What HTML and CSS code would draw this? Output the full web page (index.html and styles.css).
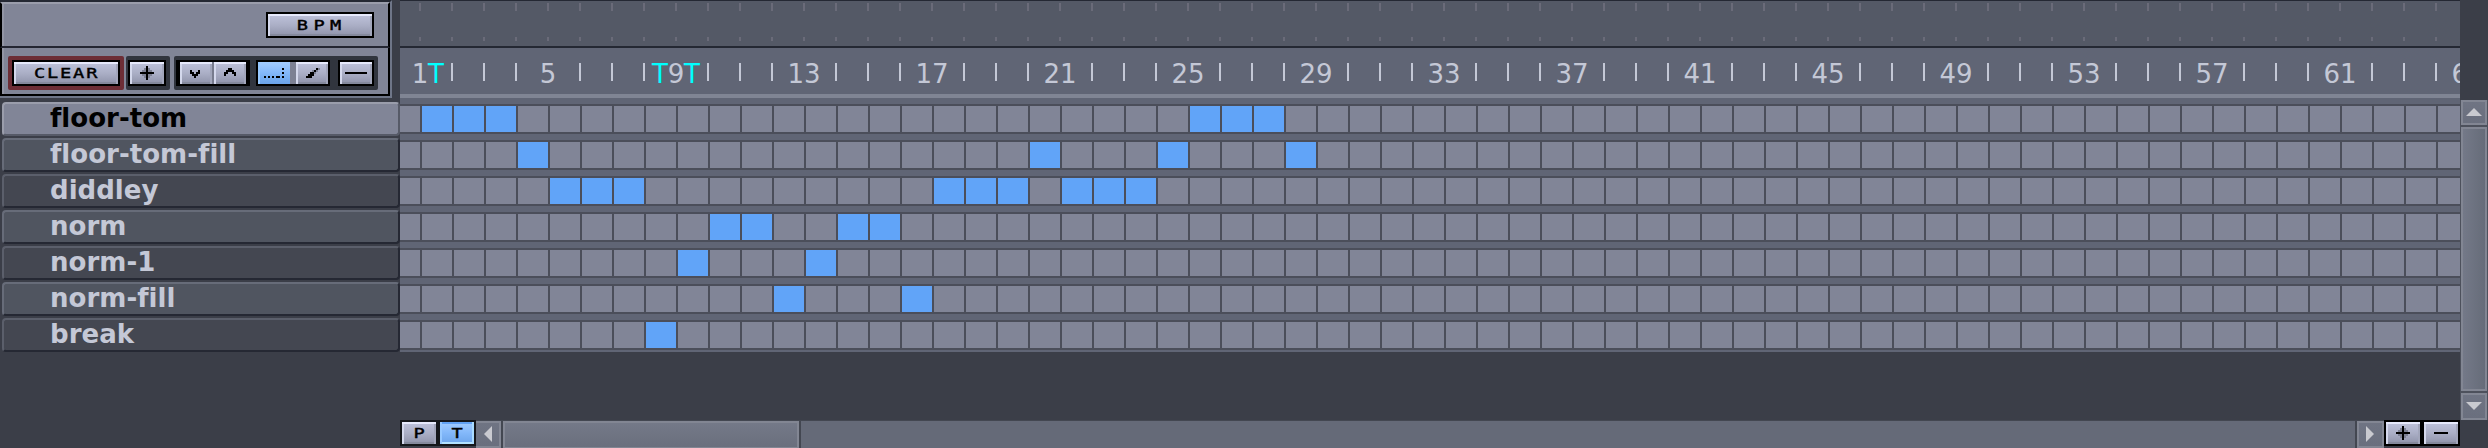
FILE: index.html
```
<!DOCTYPE html>
<html lang="en">
<head>
<meta charset="utf-8">
<title>Song editor</title>
<link rel="stylesheet" href="styles.css">
</head>
<body>
<div class="editor">
  <aside class="side">
    <div class="panel">
      <div class="panel-top"><button class="btn bpm"><span class="pixel">BPM</span></button></div>
      <div class="panel-tools">
        <div class="group danger"><button class="btn clear"><span class="pixel">CLEAR</span></button></div>
        <div class="group add"><button class="btn"><svg width="34" height="22" viewBox="0 0 34 22"><path class="shade" d="M14 6h6v2h2v6h-2v2h-6v-2h-2v-6h2z"/><path d="M16 4h2v6h6v2h-6v6h-2v-6h-6v-2h6z"/></svg></button></div>
        <div class="group wide">
          <div class="pair arrows">
            <button class="face"><svg width="32" height="22" viewBox="0 0 32 22"><path d="M10 8h2v2h2v2h2v-2h2v-2h2v4h-2v2h-2v2h-2v-2h-2v-2h-2z"/></svg></button>
            <button class="face"><svg width="32" height="22" viewBox="0 0 32 22"><path d="M14 6h4v2h2v2h2v4h-2v-2h-2v-2h-4v2h-2v2h-2v-4h2v-2h2z"/></svg></button>
          </div>
          <div class="pair modes">
            <button class="face on"><svg width="32" height="22" viewBox="0 0 32 22"><path d="M6 14h2v2h-2zM10 14h2v2h-2zM14 14h2v2h-2zM18 14h2v2h-2zM20 14h2v2h-2zM24 14h2v2h-2zM24 10h2v2h-2zM24 6h2v2h-2z"/></svg></button>
            <button class="face"><svg width="32" height="22" viewBox="0 0 32 22"><path class="shade" d="M16 8h4v-2h4v2h-2v2h-2v2h-2v-2h-2z"/><path d="M20 6h2v2h-2v2h-2v4h-2v2h-6v-2h2v-2h2v-2h4v-2h2z"/></svg></button>
          </div>
          <button class="btn"><svg width="32" height="22" viewBox="0 0 32 22"><path d="M5 10h22v2h-22z"/></svg></button>
        </div>
      </div>
    </div>
    <ul class="tracks">
      <li class="track selected">floor-tom</li>
      <li class="track">floor-tom-fill</li>
      <li class="track">diddley</li>
      <li class="track">norm</li>
      <li class="track">norm-1</li>
      <li class="track">norm-fill</li>
      <li class="track">break</li>
    </ul>
  </aside>
  <main class="main">
    <div class="overview"></div>
    <div class="ruler" id="ruler"></div>
    <div class="grid" id="grid"></div>
    <div class="space"></div>
    <div class="bottom">
      <div class="duo">
        <button class="face"><span class="pixel">P</span></button>
        <button class="face on"><span class="pixel">T</span></button>
      </div>
      <div class="hscroll">
        <div class="knob"><svg width="25" height="28" viewBox="0 0 25 28"><path class="arrow" d="M8 14L16 6V22Z"/></svg></div>
        <div class="thumb"></div>
        <div class="trough"></div>
        <div class="knob last"><svg width="27" height="28" viewBox="0 0 27 28"><path class="arrow" d="M17 14L9 6V22Z"/></svg></div>
      </div>
      <div class="duo zoom">
        <button class="face"><svg width="34" height="22" viewBox="0 0 34 22"><path class="shade" d="M14 6h6v2h2v6h-2v2h-6v-2h-2v-6h2z"/><path d="M16 4h2v6h6v2h-6v6h-2v-6h-6v-2h6z"/></svg></button>
        <button class="face"><svg width="34" height="22" viewBox="0 0 34 22"><path d="M10 10h14v2h-14z"/></svg></button>
      </div>
    </div>
  </main>
  <div class="vscroll">
    <div class="knob"><svg width="26" height="25" viewBox="0 0 26 25"><path class="arrow" d="M13 8L21 16H5Z"/></svg></div>
    <div class="thumb"></div>
    <div class="knob down"><svg width="26" height="27" viewBox="0 0 26 27"><path class="arrow" d="M13 17L5 9H21Z"/></svg></div>
  </div>
</div>
<script src="main.js"></script>
</body>
</html>
```
FILE: styles.css
```
* { box-sizing: border-box; }
body { margin: 0; background: #3b3e48; font-family: "DejaVu Sans", sans-serif; overflow: hidden; }
.editor { display: flex; width: 2488px; height: 448px; overflow: hidden; }
svg { display: block; flex: none; shape-rendering: crispEdges; }
.shade { fill: #7d8194; }
.arrow { fill: #c9cad0; shape-rendering: auto; }

.side { width: 400px; flex: none; display: flex; flex-direction: column; }
.panel { width: 392px; height: 98px; border-top: 2px solid #242833; border-right: 2px solid #6f7688; border-bottom: 2px solid #6f7688; }
.panel-top { height: 46px; background: #818597; border: 2px solid #000; border-bottom: 2px solid #242632; border-top-color: #9a9dab; box-shadow: inset 2px 0 #9295a4; display: flex; justify-content: flex-end; padding: 8px 14px 0 0; }
.panel-tools { height: 48px; background: #818597; border: 2px solid #000; border-top: 0; box-shadow: inset 2px 0 #9295a4; display: flex; align-items: flex-start; padding: 8px 0 0 6px; }

button { font: inherit; color: #000; padding: 0; margin: 0; border-radius: 0; display: flex; align-items: center; justify-content: center; overflow: hidden; }
.btn, .face { background: linear-gradient(#bfc3dc, #abafc6 50%, #8f93aa); box-shadow: inset 0 2px #e6e9fb, inset 2px 0 #d4d8ec, inset -2px 0 #a2a6bb, inset 0 -2px #858a9d; border: 0; }
.btn { border: 2px solid #000; flex: none; height: 26px; }
.on { background: linear-gradient(#a3cdff, #83b8fa 50%, #6ba4ea); box-shadow: inset 2px 0 #96c8ff; }
.pixel { font: 14px/22px "DejaVu Sans Mono", monospace; -webkit-text-stroke: .4px #000; letter-spacing: 1.4px; margin-right: -1.4px; transform: scaleX(1.33); }
.bpm { width: 108px; }
.bpm .pixel { letter-spacing: 4px; margin-right: -4px; }
.clear { width: 108px; }

.group { height: 34px; padding: 4px; background: #31353e; display: flex; border-radius: 2px; }
.danger { width: 116px; background: #6d2e36; }
.add { width: 44px; padding-left: 2px; margin-left: 2px; }
.add .btn { width: 38px; }
.wide { width: 204px; margin-left: 4px; padding-left: 2px; }
.pair { height: 26px; display: flex; flex: none; }
.arrows { width: 74px; gap: 2px; padding: 2px 0; background: linear-gradient(#000 2px, #777b8d 2px 24px, #000 24px); border: 0 solid #000; border-width: 0 4px; }
.modes { width: 74px; margin-left: 6px; gap: 6px; background: linear-gradient(#000 2px, #7d8193 2px 24px, #000 24px); border: 0 solid #000; border-width: 0 2px; padding: 2px 0; }
.pair .face { width: 32px; height: 22px; flex: none; }
.wide .btn { width: 36px; margin-left: 8px; }

.tracks { list-style: none; margin: 4px 0 0 2px; padding: 0; width: 398px; }
.track { height: 34px; margin-bottom: 2px; padding-left: 46px; border: 2px solid #676c79; border-right-color: #252833; border-bottom-color: #252833; border-radius: 4px; background: #505560; font-weight: bold; font-size: 26px; letter-spacing: .03px; line-height: 28px; color: #c4c8d6; }
.track:nth-child(odd) { background: #444751; border-top-color: #5b5f6b; border-left-color: #5b5f6b; }
.track.selected { background: #818597; color: #000; border-color: #9a9dab #565a67 #565a67 #9a9dab; }

.main { width: 2060px; flex: none; display: flex; flex-direction: column; overflow: hidden; }
.overview { height: 48px; border-top: 1px solid #242833; border-bottom: 2px solid #242833; background:
  repeating-linear-gradient(90deg, transparent 0 19px, #6a6b79 19px 21px, transparent 21px 32px) 0 2px / 100% 8px no-repeat,
  repeating-linear-gradient(90deg, transparent 0 19px, #6a6b79 19px 21px, transparent 21px 32px) 0 36px / 100% 4px no-repeat,
  #545966; }
.ruler { height: 50px; padding-left: 12px; border-bottom: 4px solid #808594; background: #606575; display: flex; }
.slot { width: 16px; flex: none; display: flex; justify-content: center; color: #c4c8d6; font-size: 26px; line-height: 52px; height: 46px; white-space: nowrap; }
.tick::before { content: ""; width: 2px; height: 18px; margin-top: 15px; background: #c4c8d6; flex: none; }
.tempo { color: #0ff; }
.grid { background: #606575; padding: 6px 0 2px; display: flex; flex-direction: column; gap: 6px; }
.row { height: 30px; padding: 2px 0; background: #4b4e5a; display: flex; gap: 2px; }
.cell { width: 30px; height: 26px; flex: none; background: #818597; }
.cell:first-child { width: 20px; }
.cell.hit { background: #61a4f8; }
.space { height: 68px; flex: none; }

.bottom { display: flex; height: 28px; }
.duo { width: 76px; height: 26px; padding: 2px; gap: 4px; background: #15171b; display: flex; flex: none; }
.duo .face { width: 34px; height: 22px; flex: none; }
.duo .on { box-shadow: inset 2px 0 #96c8ff, inset -2px 0 #a9dbff, inset 0 -2px #b2e2ff, inset 0 2px #62a2f3; }
.zoom { background: #000; }
.hscroll { width: 1908px; flex: none; display: flex; background: #434751; }
.knob, .thumb { background: linear-gradient(#6f7483, #6a6f7e); border: 2px solid #828693; flex: none; }
.hscroll .knob, .hscroll .thumb { margin-top: 1px; height: 27px; }
.hscroll .knob { width: 25px; border-left-width: 0; }
.hscroll .knob svg { margin-top: -3px; }
.hscroll .thumb { width: 296px; margin-left: 2px; background: linear-gradient(#747988, #6a6f7d); border-width: 2px 2px 1px; }
.trough { flex: 1; margin: 1px 2px 0; background: #656a78; }
.hscroll .knob.last { width: 27px; border-left-width: 2px; }
.hscroll .knob.last svg { margin-left: -2px; }
.vscroll { width: 28px; flex: none; height: 320px; margin-top: 100px; padding: 0 1px; background: #4d515c; }
.vscroll .knob { width: 26px; height: 25px; }
.vscroll .knob svg { margin: -2px; }
.vscroll .knob.down { height: 27px; }
.vscroll .thumb { height: 264px; margin: 2px 0; background: linear-gradient(90deg, #747988, #666c79); }
```
FILE: main.js
```
const hits = [
  [0, 1, 2, 24, 25, 26],
  [3, 19, 23, 27],
  [4, 5, 6, 16, 17, 18, 20, 21, 22],
  [9, 10, 13, 14],
  [8, 12],
  [11, 15],
  [7]
];
const grid = document.getElementById('grid');
hits.forEach(list => {
  const row = document.createElement('div');
  row.className = 'row';
  for (let i = -1; i < 64; i++) {
    const cell = document.createElement('div');
    cell.className = list.includes(i) ? 'cell hit' : 'cell';
    row.append(cell);
  }
  grid.append(row);
});

// Two slots per bar: labels every fourth bar, ticks between, tempo marks on half bars.
const ruler = document.getElementById('ruler');
const tempo = [1, 15, 17];
for (let i = 0; i <= 128; i++) {
  const slot = document.createElement('div');
  slot.className = 'slot';
  if (tempo.includes(i)) {
    slot.classList.add('tempo');
    slot.textContent = 'T';
  } else if (i % 8 === 0) {
    slot.textContent = i / 2 + 1;
  } else if (i % 2 === 0) {
    slot.classList.add('tick');
  }
  ruler.append(slot);
}
```
